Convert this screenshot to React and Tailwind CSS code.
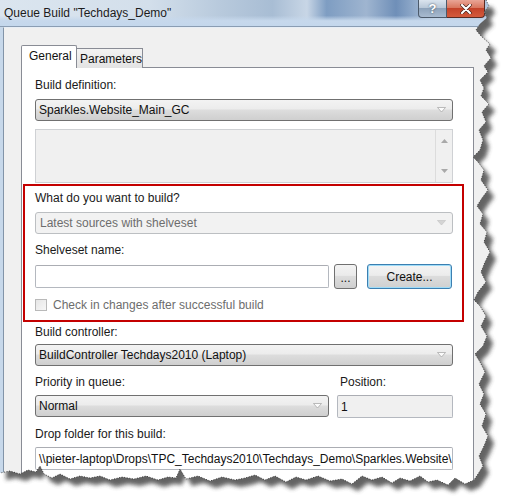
import React from "react";

const rightPts = [
  [486, 0], [489, 6], [484, 12], [487, 18], [480, 24], [476, 30], [481, 36], [490, 44], [486, 50], [491, 58],
  [484, 66], [488, 72], [480, 80], [484, 88], [481, 96], [489, 104], [482, 112], [486, 122], [479, 130], [483, 140],
  [480, 150], [473, 157], [478, 162], [484, 170], [481, 180], [488, 190], [482, 198], [477, 206], [483, 214], [480, 224],
  [487, 232], [484, 242], [490, 252], [485, 262], [481, 272], [486, 282], [478, 292], [474, 300], [480, 306], [486, 316],
  [481, 326], [487, 336], [483, 346], [475, 354], [480, 362], [485, 372], [479, 384], [484, 394], [480, 404], [486, 414],
  [482, 426], [488, 436], [484, 446], [479, 456], [483, 466], [478, 474], [474, 480],
];
const bottomPts = [
  [465, 484], [455, 478], [448, 485], [437, 480], [428, 482], [420, 476], [410, 481], [400, 478], [392, 483], [382, 477],
  [372, 480], [362, 476], [352, 484], [342, 479], [330, 481], [318, 476], [306, 480], [296, 477], [286, 482], [275, 476],
  [265, 480], [255, 475], [245, 478], [235, 480], [222, 477], [210, 481], [198, 476], [186, 479], [180, 469], [176, 478],
  [168, 477], [158, 480], [146, 476], [134, 479], [122, 477], [110, 480], [100, 476], [90, 478], [80, 476], [70, 479],
  [60, 474], [52, 478], [44, 474], [40, 466], [36, 472], [28, 470], [20, 474], [10, 471], [0, 473],
];
const torn = [...rightPts, ...bottomPts];
const dialogPath = "M0,0 " + torn.map(([x, y]) => `L${x},${y}`).join(" ") + " Z";
const outsidePath = "M0,0 H507 V500 H0 Z " + dialogPath;
const edgeLine = torn.map(([x, y]) => `${x},${y}`).join(" ");

function TornEdges() {
  return (
    <svg width="507" height="500" className="absolute left-0 top-0 pointer-events-none">
      <defs>
        <clipPath id="outside">
          <path d={outsidePath} clipRule="evenodd" />
        </clipPath>
        <filter id="blur" x="-10%" y="-10%" width="120%" height="120%">
          <feGaussianBlur stdDeviation="2.2" />
        </filter>
      </defs>
      <path d={outsidePath} fill="#ffffff" fillRule="evenodd" />
      <g clipPath="url(#outside)">
        <path d={dialogPath} fill="#3c3c3c" opacity="0.8" filter="url(#blur)" transform="translate(6,7)" />
      </g>
      <polyline points={edgeLine} fill="none" stroke="#222" strokeWidth="0.8" strokeDasharray="1 1.6" />
    </svg>
  );
}

function Label({ children, className = "" }) {
  return <div className={`h-[16px] leading-[16px] text-[12px] text-[#1a1a1a] ${className}`}>{children}</div>;
}

function Arrow({ disabled }) {
  return (
    <svg width="9" height="6" className="mr-[6px] shrink-0">
      <path d="M0.5 0.5H8.5L4.5 5Z" fill={disabled ? "#d4d4d4" : "#fbfbfb"} stroke={disabled ? "#c4c4c4" : "#a0a0a0"} strokeWidth="0.7" />
    </svg>
  );
}

function Combo({ text, className = "", disabled = false }) {
  if (disabled) {
    return (
      <div className={`flex items-center h-[22px] rounded-[3px] border border-[#bcbfc2] bg-[#f2f2f2] pl-[4px] text-[12px] text-[#6d6d6d] ${className}`}>
        <span className="flex-1 truncate">{text}</span>
        <Arrow disabled />
      </div>
    );
  }
  return (
    <div className={`flex items-center h-[22px] rounded-[3px] border border-[#707070] bg-[linear-gradient(#f3f3f3_0%,#ececec_45%,#dddddd_50%,#cfcfcf_100%)] pl-[3px] text-[12px] text-[#111] ${className}`}>
      <span className="flex-1 truncate whitespace-nowrap">{text}</span>
      <Arrow />
    </div>
  );
}

function TitleBar() {
  return (
    <div className="relative h-[27px] flex items-start bg-[linear-gradient(180deg,rgba(255,255,255,0)_0%,rgba(255,255,255,0)_60%,#c6d8ec_80%,#c4d7ec_100%),linear-gradient(90deg,#dbe5ef_0%,#d3dfeb_30%,#b7c9dc_45%,#a8bdd4_55%,#c8d6e6_62%,#7e9dc2_66%,#9fb5d0_74%,#6f8fb8_80%,#b9cbe0_88%,#aec3dc_100%)] border-b border-b-[#8a9db3]">
      <span className="ml-[4px] mt-[5px] text-[12px] leading-[16px] text-[#1c1c1c] whitespace-nowrap">Queue Build "Techdays_Demo"</span>
      <div className="flex-1" />
      <div className="flex mr-[10px]">
        <div className="w-[29px] h-[18px] border border-[#4c5a6b] border-t-0 rounded-bl-[4px] bg-[linear-gradient(#dbe4ee_0%,#b9c8d8_45%,#8ea3bb_50%,#a8bad0_100%)] flex items-center justify-center">
          <span className="text-[13px] font-bold leading-[14px] text-white [text-shadow:0_0_2px_#30404f]">?</span>
        </div>
        <div className="w-[38px] h-[18px] border border-[#5a2a22] border-t-0 border-l-0 rounded-br-[4px] bg-[linear-gradient(#e9a596_0%,#d9775f_45%,#c4432a_50%,#d45a3c_100%)] flex items-center justify-center">
          <svg width="12" height="10">
            <path d="M2 1L10 9M10 1L2 9" stroke="#3b1a14" strokeWidth="3.4" strokeLinecap="round" />
            <path d="M2 1L10 9M10 1L2 9" stroke="#ffffff" strokeWidth="2.2" strokeLinecap="round" />
          </svg>
        </div>
      </div>
    </div>
  );
}

function TextInput({ className = "", children, bg = "bg-white" }) {
  return (
    <div className={`h-[23px] flex items-center border border-[#b4b8bf] border-t-[#abadb3] rounded-[2px] ${bg} pl-[3px] text-[12px] text-[#111] overflow-hidden whitespace-nowrap ${className}`}>
      {children}
    </div>
  );
}

export default function App() {
  return (
    <div className="relative w-[507px] h-[500px] bg-white overflow-hidden font-['Liberation_Sans',Arial,sans-serif]">
      <div className="w-[495px] h-[492px] flex flex-col bg-[#c7d8ea]">
        <TitleBar />
        <div className="flex-1 ml-[3px] border-l border-t border-l-[#8294a8] border-t-[#e8eef5] bg-[#f0f0f0] pl-[17px] pt-[17px]">
          <div className="flex items-end h-[23px] relative z-10">
            <div className="w-[56px] h-[23px] border border-[#898c95] border-b-0 bg-white rounded-t-[2px] text-[12px] leading-[16px] pl-[7px] pt-[2px] text-[#111]">
              General
            </div>
            <div className="w-[66px] h-[20px] border border-[#898c95] border-l-0 border-b-0 bg-[linear-gradient(#f3f3f3,#e3e3e3)] text-[12px] leading-[16px] pl-[3px] pt-[2px] text-[#111]">
              Parameters
            </div>
          </div>
          <div className="-mt-px w-[453px] h-[420px] border border-[#898c95] bg-white pl-[13px] pr-[20px] pt-[9px]">
            <Label>Build definition:</Label>
            <Combo className="mt-[6px]" text="Sparkles.Website_Main_GC" />
            <div className="mt-[8px] h-[54px] flex border border-[#cfd1d4] bg-[#f0f0f0]">
              <div className="flex-1" />
              <div className="w-[17px] border-l border-l-[#dcdcdc] flex flex-col items-center justify-between py-[9px]">
                <svg width="7" height="4"><path d="M0 4L3.5 0L7 4Z" fill="#a9a9a9" /></svg>
                <svg width="7" height="4"><path d="M0 0L3.5 4L7 0Z" fill="#a9a9a9" /></svg>
              </div>
            </div>
            <Label className="mt-[7px]">What do you want to build?</Label>
            <Combo className="mt-[6px]" text="Latest sources with shelveset" disabled />
            <Label className="mt-[8px]">Shelveset name:</Label>
            <div className="mt-[6px] h-[25px] flex items-center">
              <TextInput className="w-[294px]" />
              <div className="ml-[5px] w-[23px] h-[25px] border border-[#707070] rounded-[3px] bg-[linear-gradient(#f3f3f3_0%,#ebebeb_45%,#dddddd_50%,#cfcfcf_100%)] flex items-end justify-center pb-[4px] text-[12px] leading-[12px] text-[#111]">
                ...
              </div>
              <div className="ml-[10px] w-[85px] h-[25px] border border-[#3c7fb1] rounded-[3px] shadow-[inset_0_0_0_1px_#9fdcf8] bg-[linear-gradient(#f4f4f4_0%,#ececec_45%,#dcdcdc_50%,#d0d0d0_100%)] flex items-center justify-center text-[12px] text-[#111]">
                Create...
              </div>
            </div>
            <div className="mt-[8px] h-[16px] flex items-center">
              <div className="w-[12px] h-[12px] border border-[#b9b9b9] bg-[linear-gradient(135deg,#e6e6e6,#f7f7f7)]" />
              <span className="ml-[6px] text-[12px] leading-[16px] text-[#6d6d6d]">Check in changes after successful build</span>
            </div>
            <Label className="mt-[11px]">Build controller:</Label>
            <Combo className="mt-[4px]" text="BuildController Techdays2010 (Laptop)" />
            <div className="mt-[8px] flex">
              <div className="w-[294px]">
                <Label>Priority in queue:</Label>
                <Combo className="mt-[5px]" text="Normal" />
              </div>
              <div className="ml-[8px] flex-1">
                <Label className="pl-[3px]">Position:</Label>
                <TextInput className="mt-[5px] h-[22px]" bg="bg-[#f0f0f0]">1</TextInput>
              </div>
            </div>
            <Label className="mt-[8px]">Drop folder for this build:</Label>
            <TextInput className="mt-[5px] h-[22px]">
              {"\\\\pieter-laptop\\Drops\\TPC_Techdays2010\\Techdays_Demo\\Sparkles.Website\\"}
            </TextInput>
          </div>
        </div>
      </div>
      <div className="absolute left-[23px] top-[184px] w-[441px] h-[138px] border-2 border-[#c40000] pointer-events-none" />
      <TornEdges />
    </div>
  );
}
